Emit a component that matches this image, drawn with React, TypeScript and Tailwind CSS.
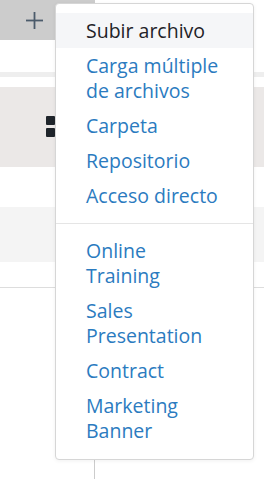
import React from "react";

type MenuItem = { label: string; active?: boolean };

const UPLOAD_ITEMS: MenuItem[] = [
  { label: "Subir archivo", active: true },
  { label: "Carga múltiple de archivos" },
  { label: "Carpeta" },
  { label: "Repositorio" },
  { label: "Acceso directo" },
];

const TEMPLATE_ITEMS: MenuItem[] = [
  { label: "Online Training" },
  { label: "Sales Presentation" },
  { label: "Contract" },
  { label: "Marketing Banner" },
];

function PlusIcon() {
  return (
    <svg width="17" height="17" viewBox="0 0 17 17" fill="#4b5b6b">
      <rect x="7.6" y="0" width="1.8" height="17" />
      <rect x="0" y="7.6" width="17" height="1.8" />
    </svg>
  );
}

function Item({ item }: { item: MenuItem }) {
  return (
    <a
      href="#"
      className={`block pl-[30px] pr-[30px] py-[5px] text-[19.5px] leading-[25px] ${
        item.active ? "bg-[#f5f6f8] text-[#1f2328]" : "text-[#2b7bbf]"
      }`}
    >
      {item.label}
    </a>
  );
}

export default function App() {
  return (
    <div className="relative w-[264px] h-[479px] overflow-hidden bg-white font-['Open_Sans',sans-serif]">
      {/* Page behind the menu */}
      <div className="flex h-10">
        <div className="w-[95px] h-10 bg-[#cccccc] flex items-center pl-[26px]">
          <PlusIcon />
        </div>
      </div>
      <div className="h-8" />
      <div className="h-[5px] bg-[#eeeeee]" />
      <div className="h-[10px]" />
      <div className="h-20 bg-[#ebe8e7] pt-[29px] pl-[46px] flex flex-col gap-[3px]">
        <div className="w-[9px] h-[9px] rounded-[1px] bg-[#1f252b]" />
        <div className="w-[9px] h-[9px] rounded-[1px] bg-[#1f252b]" />
      </div>
      <div className="h-10" />
      <div className="h-[55px] bg-[#f4f4f4]" />
      <div className="h-[25px]" />
      <div className="h-px bg-[#dddddd]" />
      <div className="h-[191px] ml-[94px] border-l border-[#cccccc]" />

      {/* Dropdown menu */}
      <div className="absolute left-[55px] top-[3px] w-[199px] rounded-[4px] border border-[#d6d6d6] bg-white shadow-[0_1px_4px_rgba(0,0,0,0.06)] pt-[9px] pb-[11px]">
        {UPLOAD_ITEMS.map((item) => (
          <Item key={item.label} item={item} />
        ))}
        <div className="mt-[10px] mb-[9px] h-px bg-[#e5e5e5]" />
        {TEMPLATE_ITEMS.map((item) => (
          <Item key={item.label} item={item} />
        ))}
      </div>
    </div>
  );
}
